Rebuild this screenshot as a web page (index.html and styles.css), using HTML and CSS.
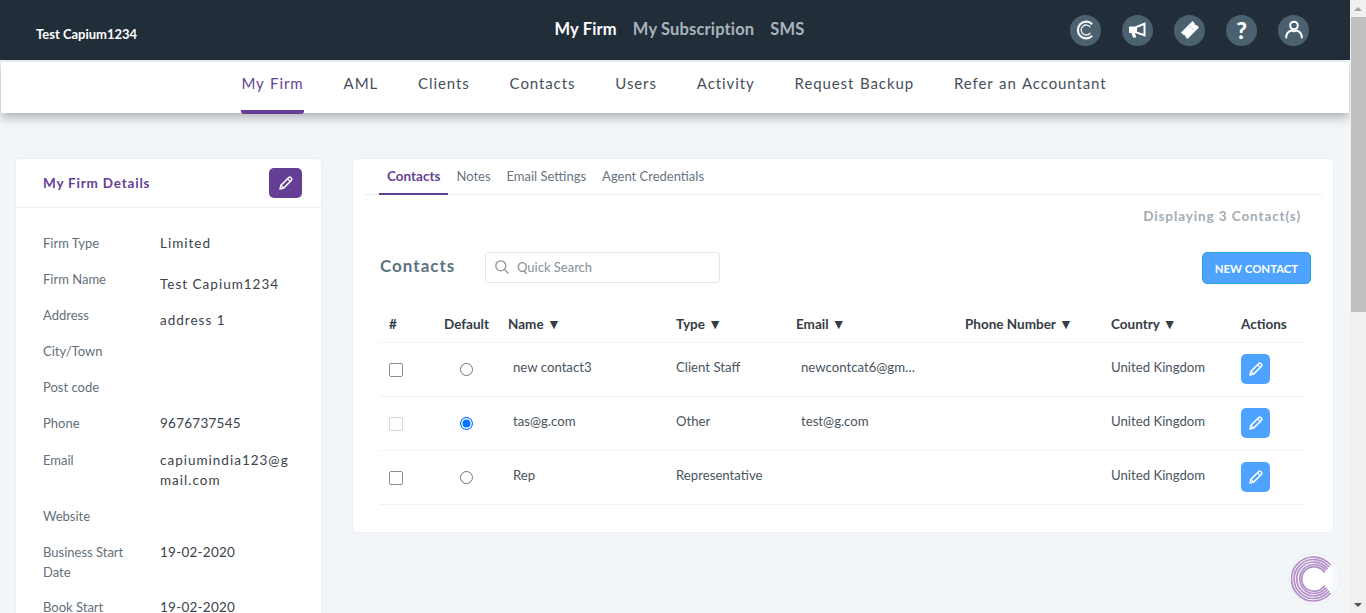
FILE: index.html
```html
<!DOCTYPE html>
<html lang="en">
<head>
    <meta charset="UTF-8">
    <title>My Firm</title>
    <link rel="stylesheet" href="styles.css">
</head>
<body>
    <svg class="icon-defs" width="0" height="0">
        <symbol id="pencil" viewBox="0 0 16 16">
            <path d="M2 14l.9-3.6 7.9-7.9a1.3 1.3 0 0 1 1.8 0l.9.9a1.3 1.3 0 0 1 0 1.8l-7.9 7.9z" fill="none" stroke="currentColor" stroke-width="1.5" stroke-linejoin="round"/>
            <path d="M9.6 3.8l2.6 2.6M3 10.5l2.5 2.5" fill="none" stroke="currentColor" stroke-width="1.2"/>
        </symbol>
    </svg>

    <div class="page">
        <header class="topbar">
            <div class="firm-title">Test Capium1234</div>
            <nav class="topbar-links">
                <a class="active" href="#">My Firm</a>
                <a href="#">My Subscription</a>
                <a href="#">SMS</a>
            </nav>
            <div class="topbar-icons">
                <span class="round-icon">
                    <svg width="22" height="22" viewBox="0 0 22 22" fill="none" stroke="#f1f3f4">
                        <path d="M17.2 5.300a8.300 8.300 0 1 0 0 11.400" stroke-width="2.200"/>
                        <path d="M15.300 8.200a5 5 0 1 0 0 5.600" stroke-width="1.300"/>
                    </svg>
                </span>
                <span class="round-icon">
                    <svg width="20" height="20" viewBox="0 0 20 20">
                        <path d="M1 6.500h6v6.500H1z" fill="#fff"/>
                        <path d="M7 6.500l10.500-4.200v14.400L7 13z" fill="#fff"/>
                        <path d="M9 7.800l6.500-2.600v8.600L9 11.700z" fill="#4b6170"/>
                        <path d="M3.500 13H7l1.200 4.500H5z" fill="#fff"/>
                    </svg>
                </span>
                <span class="round-icon">
                    <svg width="24" height="24" viewBox="0 0 24 24">
                        <path d="M3 14.500L14.500 3l2.200 2.200a1.800 1.800 0 0 0 2.100 2.100L21 9.500 9.500 21l-2.200-2.200a1.800 1.800 0 0 0-2.100-2.100z" fill="#fff"/>
                        <path d="M11.500 8l4.500 4.500" stroke="#9fb0bb" stroke-width="1" stroke-dasharray="1.500 1"/>
                    </svg>
                </span>
                <span class="round-icon help">?</span>
                <span class="round-icon">
                    <svg width="20" height="22" viewBox="0 0 20 22" fill="none" stroke="#fff" stroke-width="2">
                        <circle cx="10" cy="6.500" r="3.800"/>
                        <path d="M2.200 18.500c0-3.500 2.500-6.200 5-7 1.700.8 3.900.8 5.600 0 2.500.8 5 3.500 5 7" stroke-linecap="round"/>
                    </svg>
                </span>
            </div>
        </header>

        <nav class="mainnav">
            <a class="active" href="#">My Firm</a>
            <a href="#">AML</a>
            <a href="#">Clients</a>
            <a href="#">Contacts</a>
            <a href="#">Users</a>
            <a href="#">Activity</a>
            <a href="#">Request Backup</a>
            <a href="#">Refer an Accountant</a>
        </nav>

        <main class="content">
            <aside class="card details">
                <div class="details-head">
                    <h2>My Firm Details</h2>
                    <button class="edit-btn purple"><svg width="16" height="16"><use href="#pencil"/></svg></button>
                </div>
                <dl class="details-list">
                    <div class="row"><dt>Firm Type</dt><dd>Limited</dd></div>
                    <div class="row"><dt>Firm Name</dt><dd class="low">Test Capium1234</dd></div>
                    <div class="row"><dt>Address</dt><dd class="low">address 1</dd></div>
                    <div class="row"><dt>City/Town</dt><dd></dd></div>
                    <div class="row"><dt>Post code</dt><dd></dd></div>
                    <div class="row phone"><dt>Phone</dt><dd class="num">9676737545</dd></div>
                    <div class="row tall"><dt>Email</dt><dd>capiumindia123@gmail.com</dd></div>
                    <div class="row"><dt>Website</dt><dd></dd></div>
                    <div class="row tall short"><dt>Business Start Date</dt><dd class="num">19-02-2020</dd></div>
                    <div class="row"><dt>Book Start</dt><dd class="num">19-02-2020</dd></div>
                </dl>
            </aside>

            <section class="card contacts">
                <div class="tabs">
                    <a class="active" href="#">Contacts</a>
                    <a href="#">Notes</a>
                    <a href="#">Email Settings</a>
                    <a href="#">Agent Credentials</a>
                </div>
                <p class="count">Displaying 3 Contact(s)</p>
                <div class="toolbar">
                    <h2>Contacts</h2>
                    <label class="search">
                        <svg width="16" height="16" viewBox="0 0 16 16" fill="none" stroke="#8b949c" stroke-width="1.300">
                            <circle cx="6.800" cy="6.800" r="5"/>
                            <path d="M10.500 10.500l4 4"/>
                        </svg>
                        <input type="text" placeholder="Quick Search">
                    </label>
                    <button class="new-btn">NEW CONTACT</button>
                </div>
                <table class="grid">
                    <thead>
                        <tr>
                            <th class="col-check">#</th>
                            <th class="col-default">Default</th>
                            <th class="col-name">Name <i>▼</i></th>
                            <th class="col-type">Type <i>▼</i></th>
                            <th class="col-email">Email <i>▼</i></th>
                            <th class="col-phone">Phone Number <i>▼</i></th>
                            <th class="col-country">Country <i>▼</i></th>
                            <th>Actions</th>
                        </tr>
                    </thead>
                    <tbody>
                        <tr>
                            <td><span class="check"></span></td>
                            <td class="center"><span class="radio"></span></td>
                            <td class="inset">new contact3</td>
                            <td>Client Staff</td>
                            <td class="inset"><span class="clip">newcontcat6@gmail.com</span></td>
                            <td></td>
                            <td>United Kingdom</td>
                            <td><button class="edit-btn blue"><svg width="16" height="16"><use href="#pencil"/></svg></button></td>
                        </tr>
                        <tr>
                            <td><span class="check off"></span></td>
                            <td class="center"><span class="radio on"></span></td>
                            <td class="inset">tas@g.com</td>
                            <td>Other</td>
                            <td class="inset">test@g.com</td>
                            <td></td>
                            <td>United Kingdom</td>
                            <td><button class="edit-btn blue"><svg width="16" height="16"><use href="#pencil"/></svg></button></td>
                        </tr>
                        <tr>
                            <td><span class="check"></span></td>
                            <td class="center"><span class="radio"></span></td>
                            <td class="inset">Rep</td>
                            <td>Representative</td>
                            <td></td>
                            <td></td>
                            <td>United Kingdom</td>
                            <td><button class="edit-btn blue"><svg width="16" height="16"><use href="#pencil"/></svg></button></td>
                        </tr>
                    </tbody>
                </table>
            </section>
        </main>

        <div class="chat-bubble">
            <svg width="48" height="48" viewBox="0 0 48 48" fill="none" stroke="#b18ec6" stroke-width="1.700">
                <path d="M39.500 10a22 22 0 1 0 0 28"/>
                <path d="M38 12a19.500 19.500 0 1 0 0 24"/>
                <path d="M36.500 14a17 17 0 1 0 0 20"/>
                <path d="M35 15.500a14.500 14.500 0 1 0 0 17"/>
                <path d="M33.500 17.500a12.300 12.300 0 1 0 0 13"/>
            </svg>
        </div>
    </div>

    <div class="scrollbar">
        <span class="arrow up"></span>
        <span class="thumb"></span>
        <span class="arrow down"></span>
    </div>
</body>
</html>
```

FILE: styles.css
```css
* {
    box-sizing: border-box;
}
html, body {
    height: 100%;
}
body {
    margin: 0;
    display: flex;
    overflow: hidden;
    font-family: Lato, "Open Sans", sans-serif;
    color: #4a5560;
    background-color: #f3f6f9;
}
a {
    text-decoration: none;
    color: inherit;
}
h2, p, dl, dd {
    margin: 0;
}
.icon-defs {
    position: absolute;
}
.page {
    position: relative;
    flex: 1;
    min-width: 0;
    height: 100%;
    overflow: hidden;
}

/* top bar */
.topbar {
    position: relative;
    height: 60px;
    display: grid;
    grid-template-columns: 1fr auto 1fr;
    align-items: center;
    padding: 0 41px 0 36px;
    background-color: #222d3a;
}
.firm-title {
    margin-top: 8px;
    font-size: 13px;
    font-weight: 700;
    color: #fff;
}
.topbar-links {
    display: flex;
    gap: 16px;
    margin-left: 14px;
    margin-top: -2px;
    font-size: 16.500px;
    font-weight: 700;
    letter-spacing: .15px;
    color: #a9b3bb;
}
.topbar-links .active {
    color: #fff;
}
.topbar-icons {
    display: flex;
    justify-content: flex-end;
    gap: 21px;
}
.round-icon {
    width: 31px;
    height: 31px;
    border-radius: 50%;
    background-color: #4b6170;
    display: flex;
    align-items: center;
    justify-content: center;
}
.round-icon.help {
    font-size: 23px;
    font-weight: 900;
    color: #fff;
}

/* main nav */
.mainnav {
    position: relative;
    height: 51px;
    margin: 2px 1px 0 1px;
    display: flex;
    justify-content: center;
    gap: 40px;
    padding-right: 2px;
    background-color: #fff;
    box-shadow: 0 4px 10px rgba(0, 0, 0, 0.3);
    font-size: 15px;
    letter-spacing: .9px;
    word-spacing: 1px;
    color: #46505a;
}
.mainnav a {
    height: 52px;
    line-height: 42px;
    border-bottom: 4px solid transparent;
}
.mainnav a.active {
    color: #653f96;
    border-bottom-color: #653f96;
    border-radius: 0 0 3px 3px;
}

/* cards */
.content {
    display: flex;
    align-items: flex-start;
    gap: 30px;
    padding: 45px 16px 0 15px;
}
.card {
    background-color: #fff;
    border: 1px solid #edf0f4;
    border-radius: 5px;
}
.details {
    flex: 0 0 307px;
    height: 600px;
}
.details-head {
    height: 49px;
    display: flex;
    align-items: center;
    justify-content: space-between;
    padding: 0 19px 0 27px;
    border-bottom: 1px solid #edf0f4;
}
.details-head h2 {
    font-size: 13.500px;
    font-weight: 700;
    letter-spacing: .8px;
    color: #653f96;
}
.edit-btn {
    width: 29px;
    height: 30px;
    padding: 0;
    border: 0;
    border-radius: 5px;
    color: #fff;
    display: flex;
    align-items: center;
    justify-content: center;
}
.edit-btn.purple {
    width: 33px;
    background-color: #653f96;
}
.edit-btn.blue {
    margin-top: 4px;
    background-color: #4da3ff;
}
.details-list {
    padding: 25px 31px 0 27px;
    font-size: 13px;
    line-height: 20px;
}
.row {
    display: grid;
    grid-template-columns: 117px 1fr;
    min-height: 36px;
}
.row.phone {
    min-height: 37px;
}
.row.tall {
    min-height: 56px;
}
.row.tall.short {
    min-height: 55px;
}
.row dt {
    padding-right: 20px;
    color: #646f7a;
}
.row dd {
    font-size: 13.500px;
    letter-spacing: 1px;
    color: #3a434c;
    word-break: break-all;
}
.row dd.low {
    padding-top: 5px;
}
.row dd.num {
    letter-spacing: .25px;
}

/* contacts panel */
.contacts {
    flex: 1;
    height: 375px;
    padding: 0 11px 0 12px;
}
.tabs {
    height: 36px;
    display: flex;
    padding-left: 14px;
    border-bottom: 1px solid #e8edf2;
    font-size: 13px;
    color: #69747f;
}
.tabs a {
    height: 36px;
    padding: 0 8px;
    line-height: 35px;
}
.tabs a.active {
    font-size: 13.500px;
    font-weight: 700;
    color: #653f96;
    border-bottom: 2px solid #653f96;
}
.count {
    padding: 13px 21px 0 0;
    text-align: right;
    font-size: 13.500px;
    font-weight: 700;
    letter-spacing: .9px;
    color: #a3acb4;
}
.toolbar {
    display: flex;
    align-items: center;
    margin-top: 27px;
    padding: 0 11px 0 15px;
}
.toolbar h2 {
    width: 105px;
    margin-top: -5px;
    font-size: 17px;
    font-weight: 700;
    letter-spacing: 1px;
    color: #5d7380;
}
.search {
    width: 235px;
    height: 31px;
    display: flex;
    align-items: center;
    gap: 7px;
    padding: 0 0 2px 8px;
    border: 1px solid #e4e7ea;
    border-radius: 3px;
}
.search input {
    flex: 1;
    min-width: 0;
    border: 0;
    outline: 0;
    padding: 0;
    font: 13px Lato, "Open Sans", sans-serif;
}
.search input::placeholder {
    color: #87909a;
}
.new-btn {
    margin-left: auto;
    margin-top: 1px;
    width: 109px;
    height: 32px;
    padding: 0;
    border: 1px solid #27a0dc;
    border-radius: 5px;
    background-color: #4da3ff;
    font: 700 11.400px Lato, "Open Sans", sans-serif;
    color: #fff;
}
.grid {
    width: 925px;
    margin: 20px 0 0 14px;
    border-collapse: collapse;
    table-layout: fixed;
    font-size: 13.200px;
}
.grid th {
    height: 38px;
    padding: 2px 0 0 0;
    text-align: left;
    font-size: 13.500px;
    font-weight: 700;
    color: #343c44;
    white-space: nowrap;
}
.grid th i {
    font-style: normal;
    font-size: 14px;
    line-height: 1;
}
.grid tr {
    border-bottom: 1px solid #f0f2f5;
}
.grid td {
    height: 54px;
    padding: 0 0 5px 0;
    color: #4a5560;
    white-space: nowrap;
}
.grid .col-check {
    width: 65px;
    padding-left: 10px;
}
.grid .col-default {
    width: 64px;
}
.grid .col-name {
    width: 168px;
}
.grid .col-type {
    width: 120px;
}
.grid .col-email {
    width: 169px;
}
.grid .col-phone {
    width: 146px;
}
.grid .col-country {
    width: 130px;
}
.grid td:first-child {
    padding-left: 10px;
}
.grid td.center {
    padding-left: 16px;
}
.grid td.inset {
    padding-left: 5px;
}
.clip {
    display: block;
    width: 119px;
    overflow: hidden;
    text-overflow: ellipsis;
}
.check {
    display: block;
    width: 14px;
    height: 14px;
    margin-top: 6px;
    border: 1px solid #8f8f8f;
    border-radius: 2px;
}
.check.off {
    border-color: #d5d5d5;
}
.radio {
    display: block;
    width: 13px;
    height: 13px;
    margin-top: 5px;
    border: 1px solid #767676;
    border-radius: 50%;
}
.radio.on {
    border: 1px solid #0075ff;
    background-color: #0075ff;
    box-shadow: inset 0 0 0 1.500px #fff;
}

/* floating chat */
.chat-bubble {
    position: absolute;
    right: 11px;
    bottom: 10px;
    width: 49px;
    height: 49px;
    display: flex;
    align-items: center;
    justify-content: center;
    border-radius: 50%;
    background: radial-gradient(circle, #fff 45%, #f6f8fb 60%);
    box-shadow: 0 0 3px rgba(0, 0, 0, 0.08);
}

/* window scrollbar */
.scrollbar {
    flex: 0 0 16px;
    display: flex;
    flex-direction: column;
    background-color: #f0f0f0;
}
.thumb {
    display: block;
    height: 295px;
    margin: 0 0 auto 1px;
    background-color: #c0c0c0;
}
.arrow {
    flex: 0 0 17px;
    display: flex;
    align-items: center;
    justify-content: center;
}
.arrow::before {
    content: "";
    border-left: 4px solid transparent;
    border-right: 4px solid transparent;
}
.arrow.up::before {
    border-bottom: 4px solid #a3a3a3;
}
.arrow.down::before {
    border-top: 4px solid #505050;
}
```
